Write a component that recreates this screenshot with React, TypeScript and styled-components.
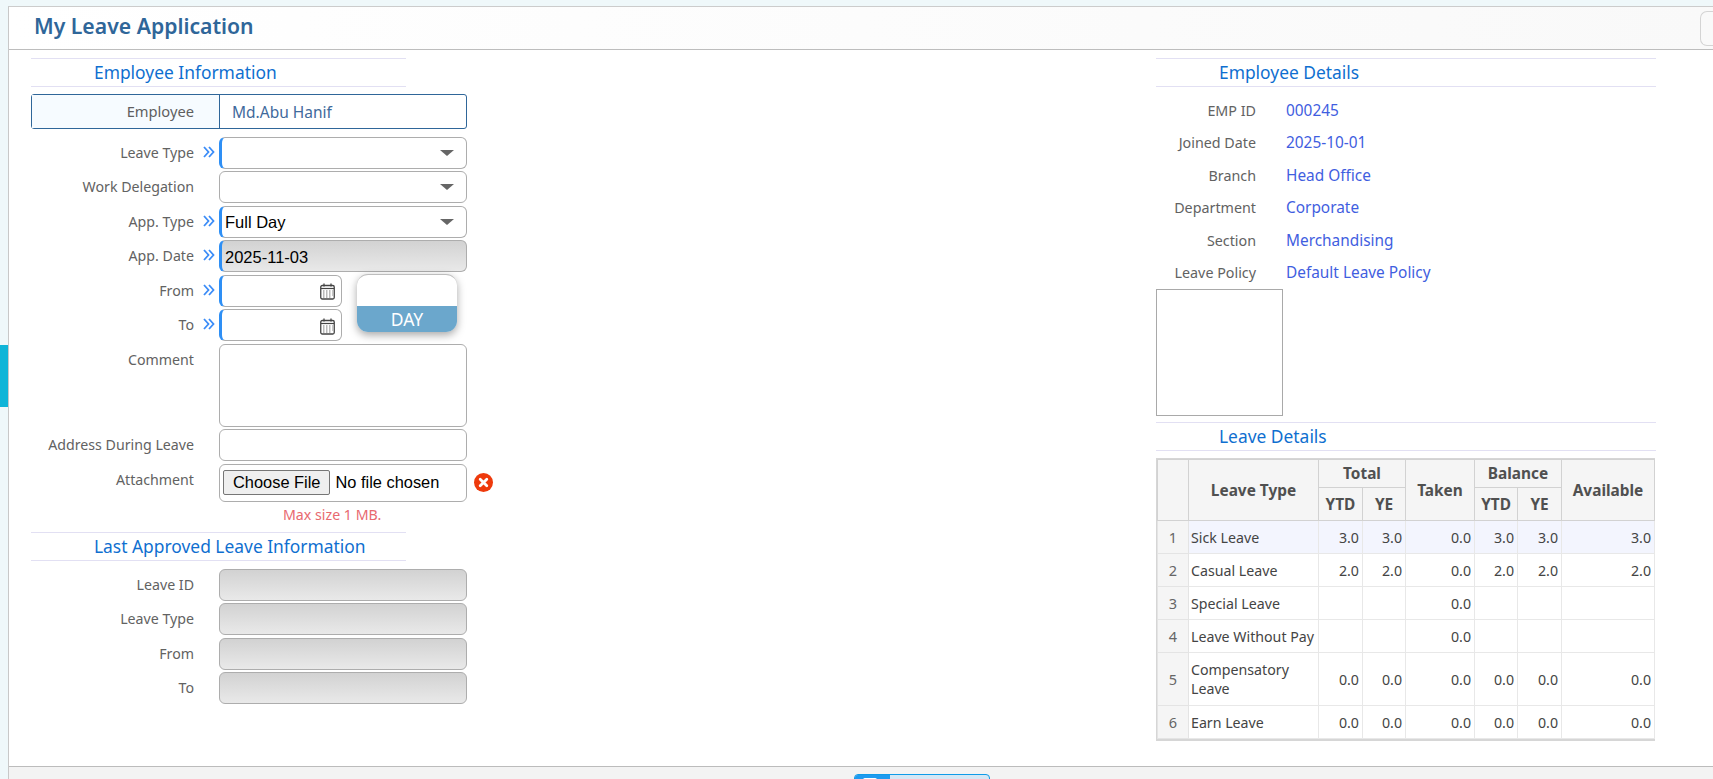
import React from 'react'
import styled, { createGlobalStyle } from 'styled-components'

const GlobalStyle = createGlobalStyle`
  html, body {
    margin: 0;
    padding: 0;
    height: 100%;
    background: #ffffff;
    overflow: hidden;
  }
  * {
    box-sizing: border-box;
  }
  #root {
    height: 100%;
  }
`

const UI_FONT = `'Noto Sans', 'Open Sans', sans-serif`
const FIELD_FONT = `'Liberation Sans', Arial, sans-serif`

const Page = styled.div`
  width: 1713px;
  height: 779px;
  display: flex;
  background: #eff8fa;
  font-family: ${UI_FONT};
  overflow: hidden;
`

const Rail = styled.div`
  width: 8px;
  flex: none;
  padding-top: 345px;
`

const RailTab = styled.div`
  height: 62px;
  background: #10b5d8;
`

const Frame = styled.div`
  flex: 1;
  min-width: 0;
  margin-top: 6px;
  border-top: 1px solid #cccccc;
  border-left: 1px solid #c8c8c8;
  background: #ffffff;
  display: flex;
  flex-direction: column;
`

const Header = styled.header`
  height: 43px;
  flex: none;
  border-bottom: 1px solid #bdbdbd;
  background: linear-gradient(to right, #ffffff, #f9f9f9);
  display: flex;
  align-items: center;
  justify-content: space-between;
  padding: 0 0 0 25px;
`

const Title = styled.h1`
  margin: 0 0 6px;
  font-size: 21.2px;
  font-weight: 600;
  color: #2f6699;
`

const HeaderButton = styled.div`
  width: 13px;
  height: 35px;
  border: 1px solid #d4d4d4;
  border-right: 0;
  border-radius: 7px 0 0 7px;
`

const Main = styled.main`
  flex: 1;
  min-height: 0;
  display: flex;
  justify-content: space-between;
  padding: 8px 57px 0 22px;
`

const LeftColumn = styled.section`
  width: 440px;
  display: flex;
  flex-direction: column;
`

const RightColumn = styled.section`
  width: 500px;
  display: flex;
  flex-direction: column;
`

const SectionTitle = styled.h2<{ $indent: number; $width?: number }>`
  margin: 0;
  height: 29px;
  width: ${(p) => (p.$width ? `${p.$width}px` : '100%')};
  flex: none;
  border-top: 1px solid #e2e0f3;
  border-bottom: 1px solid #e2e0f3;
  padding-left: ${(p) => p.$indent}px;
  font-size: 17.4px;
  font-weight: 400;
  line-height: 26px;
  color: #0f6fd0;
`

const EmployeeBox = styled.div`
  display: flex;
  width: 436px;
  height: 35px;
  margin-top: 7px;
  flex: none;
  border: 1px solid #2f6699;
  border-radius: 3px;
`

const EmployeeLabel = styled.div`
  width: 188px;
  flex: none;
  padding-right: 25px;
  border-right: 1px solid #2f6699;
  background: #f6fbff;
  text-align: right;
  font-size: 14.7px;
  line-height: 33px;
  color: #5f5f5f;
`

const EmployeeValue = styled.div`
  padding-left: 12px;
  font-size: 15.5px;
  line-height: 34px;
  color: #3f6a9c;
`

const FieldList = styled.div<{ $top: number }>`
  display: flex;
  flex-direction: column;
  gap: 2.45px;
  margin-top: ${(p) => p.$top}px;
`

const FieldRow = styled.div`
  display: flex;
  align-items: flex-start;
`

const FieldLabel = styled.label`
  width: 163px;
  height: 30px;
  flex: none;
  text-align: right;
  font-size: 14.2px;
  line-height: 31px;
  color: #626262;
  white-space: nowrap;
`

const Marker = styled.span`
  width: 25px;
  height: 30px;
  flex: none;
  padding-left: 9px;
  display: flex;
  align-items: center;
`

const Control = styled.div<{ $width?: number; $height?: number; $required?: boolean; $readOnly?: boolean; $inset?: number }>`
  width: ${(p) => p.$width ?? 248}px;
  height: ${(p) => p.$height ?? 32}px;
  flex: none;
  display: flex;
  align-items: center;
  justify-content: space-between;
  border: 1px solid #adadad;
  border-left: ${(p) => (p.$required ? '3px solid #2e8ff5' : '1px solid #adadad')};
  border-radius: 6px;
  background: ${(p) => (p.$readOnly ? 'linear-gradient(to bottom, #d2d2d2, #e9e9e9)' : '#ffffff')};
  padding: 2px ${(p) => p.$inset ?? 12}px 0 3px;
  font-family: ${FIELD_FONT};
  font-size: 16.5px;
  color: #000000;
`

const Caret = styled.span`
  width: 0;
  height: 0;
  margin-top: -2px;
  border-left: 7px solid transparent;
  border-right: 7px solid transparent;
  border-top: 6.5px solid #666666;
`

const DateGroup = styled.div`
  display: flex;
  align-items: flex-start;
`

const DateRows = styled.div`
  display: flex;
  flex-direction: column;
  gap: 2.45px;
`

const DayBox = styled.div`
  width: 100px;
  height: 58px;
  margin: -1px 0 0 15px;
  display: flex;
  flex-direction: column;
  justify-content: flex-end;
  border-top: 1px solid #bdbdbd;
  border-radius: 11px;
  background: #ffffff;
  box-shadow: 0 3px 9px rgba(0, 0, 0, 0.35);
  overflow: hidden;
`

const DayLabel = styled.div`
  height: 26px;
  background: #6ba7cc;
  text-align: center;
  font-size: 17.5px;
  line-height: 26px;
  color: #ffffff;
`

const FileControl = styled(Control)`
  padding: 0 3px;
  justify-content: flex-start;
`

const FileInput = styled.input`
  width: 240px;
  font-family: ${FIELD_FONT};
  font-size: 16.4px;
  color: #000000;

  &::file-selector-button {
    font: inherit;
    padding: 2px 9px;
    margin-right: 5px;
    border: 1px solid #767676;
    border-radius: 2px;
    background: #efefef;
  }
`

const ClearButton = styled.button`
  width: 19px;
  height: 19px;
  flex: none;
  margin: 9px 0 0 7px;
  padding: 0;
  border: 0;
  background: transparent;
  display: flex;
`

const SizeHint = styled.div`
  margin: 3px 0 8px 163px;
  padding-left: 89px;
  font-size: 14.2px;
  line-height: 19px;
  color: #e8696f;
`

const DetailList = styled.dl`
  margin: 8px 0 0;
  display: grid;
  grid-template-columns: 100px 1fr;
  grid-auto-rows: 32.4px;
  column-gap: 30px;
`

const DetailLabel = styled.dt`
  text-align: right;
  font-size: 14.3px;
  line-height: 32px;
  color: #626262;
`

const DetailValue = styled.dd`
  margin: 0;
  font-size: 15.4px;
  line-height: 31.5px;
  color: #3f5ee0;
`

const PhotoBox = styled.div`
  width: 127px;
  height: 127px;
  margin: 0 0 6px;
  flex: none;
  border: 1px solid #a9a9a9;
`

const TableWrap = styled.div`
  width: 499px;
  margin-top: 7px;
  border: 1px solid #d6d6d6;
  border-right-width: 2px;
  border-bottom-width: 2px;
`

const LeaveTable = styled.table`
  width: 100%;
  table-layout: fixed;
  border-collapse: collapse;
  font-size: 14.2px;
`

const HeadCell = styled.th<{ $height?: number }>`
  height: ${(p) => p.$height ?? 34}px;
  padding: 0;
  border: 1px solid #d2d2d2;
  background: #f5f5f5;
  font-size: 15.4px;
  font-weight: 700;
  color: #505050;
`

const RowNumber = styled.td`
  padding: 0;
  border: 1px solid #e4e4e4;
  background: #f5f5f5;
  text-align: center;
  font-size: 14.5px;
  color: #666666;
`

const NameCell = styled.td`
  padding: 0 2px;
  border: 1px solid #e8e8e8;
  line-height: 19px;
  color: #444444;
`

const NumberCell = styled.td`
  padding: 0 3px;
  border: 1px solid #e8e8e8;
  text-align: right;
  color: #444444;
`

const TableRow = styled.tr<{ $height: number; $active?: boolean }>`
  height: ${(p) => p.$height}px;
  background: ${(p) => (p.$active ? '#f3f5fe' : '#ffffff')};
`

const Footer = styled.footer`
  height: 13px;
  flex: none;
  border-top: 1px solid #bcbcbc;
  background: #f3f3f3;
  display: flex;
  padding: 7px 0 0 845px;
  overflow: hidden;
`

const FooterButton = styled.div`
  width: 136px;
  height: 32px;
  display: flex;
  border: 1px solid #0f9be8;
  border-radius: 4px;
  background: #d4e7f5;
  overflow: hidden;
`

const FooterIcon = styled.div`
  width: 35px;
  flex: none;
  background: #1f9bf0;
  padding: 3px 0 0 8px;
`

const FooterGlyph = styled.div`
  width: 14px;
  height: 10px;
  border-radius: 2px;
  background: #ffffff;
`

const DoubleChevron = () => (
  <svg width='12' height='12' viewBox='0 0 12 12' fill='none' stroke='#3b8cf7' strokeWidth='1.8'>
    <polyline points='1,1 5.5,6 1,11' />
    <polyline points='6,1 10.5,6 6,11' />
  </svg>
)

const CalendarIcon = () => (
  <svg width='15' height='17' viewBox='0 0 15 17' fill='none'>
    <rect x='0.75' y='2.5' width='13.5' height='13.5' rx='1.5' stroke='#444444' strokeWidth='1.3' />
    <path d='M1 5.5h13' stroke='#444444' strokeWidth='1.2' />
    <path d='M4 0.5v3M11 0.5v3' stroke='#444444' strokeWidth='1.3' />
    <path
      d='M3 8h1.5M6 8h1.5M9 8h1.5M12 8h.8M3 10h1.5M6 10h1.5M9 10h1.5M12 10h.8M3 12h1.5M6 12h1.5M9 12h1.5M12 12h.8M3 14h1.5M6 14h1.5M9 14h1.5'
      stroke='#777777'
      strokeWidth='1.1'
    />
  </svg>
)

const ClearIcon = () => (
  <svg width='19' height='19' viewBox='0 0 19 19'>
    <circle cx='9.5' cy='9.5' r='9.5' fill='#ee3a0c' />
    <path d='M6.2 6.2l6.6 6.6M12.8 6.2l-6.6 6.6' stroke='#ffffff' strokeWidth='2.8' strokeLinecap='round' />
  </svg>
)

const Field = ({ label, required, children }: { label: string; required?: boolean; children: React.ReactNode }) => (
  <FieldRow>
    <FieldLabel>{label}</FieldLabel>
    <Marker>{required && <DoubleChevron />}</Marker>
    {children}
  </FieldRow>
)

const EMPLOYEE_DETAILS = [
  { label: 'EMP ID', value: '000245' },
  { label: 'Joined Date', value: '2025-10-01' },
  { label: 'Branch', value: 'Head Office' },
  { label: 'Department', value: 'Corporate' },
  { label: 'Section', value: 'Merchandising' },
  { label: 'Leave Policy', value: 'Default Leave Policy' },
]

const LEAVE_ROWS = [
  { name: 'Sick Leave', values: ['3.0', '3.0', '0.0', '3.0', '3.0', '3.0'], height: 33, active: true },
  { name: 'Casual Leave', values: ['2.0', '2.0', '0.0', '2.0', '2.0', '2.0'], height: 33 },
  { name: 'Special Leave', values: ['', '', '0.0', '', '', ''], height: 33 },
  { name: 'Leave Without Pay', values: ['', '', '0.0', '', '', ''], height: 33 },
  { name: 'Compensatory Leave', values: ['0.0', '0.0', '0.0', '0.0', '0.0', '0.0'], height: 53 },
  { name: 'Earn Leave', values: ['0.0', '0.0', '0.0', '0.0', '0.0', '0.0'], height: 33 },
]

const COLUMN_WIDTHS = [31, 130, 44, 43, 69, 43, 44, 93]

const App = () => {
  return (
    <>
      <GlobalStyle />
      <Page>
        <Rail>
          <RailTab />
        </Rail>
        <Frame>
          <Header>
            <Title>My Leave Application</Title>
            <HeaderButton />
          </Header>
          <Main>
            <LeftColumn>
              <SectionTitle $indent={63} $width={375}>
                Employee Information
              </SectionTitle>
              <EmployeeBox>
                <EmployeeLabel>Employee</EmployeeLabel>
                <EmployeeValue>Md.Abu Hanif</EmployeeValue>
              </EmployeeBox>
              <FieldList $top={8}>
                <Field label='Leave Type' required>
                  <Control $required>
                    <span />
                    <Caret />
                  </Control>
                </Field>
                <Field label='Work Delegation'>
                  <Control>
                    <span />
                    <Caret />
                  </Control>
                </Field>
                <Field label='App. Type' required>
                  <Control $required>
                    <span>Full Day</span>
                    <Caret />
                  </Control>
                </Field>
                <Field label='App. Date' required>
                  <Control $required $readOnly>
                    <span>2025-11-03</span>
                  </Control>
                </Field>
                <DateGroup>
                  <DateRows>
                    <Field label='From' required>
                      <Control $required $width={123} $inset={6}>
                        <span />
                        <CalendarIcon />
                      </Control>
                    </Field>
                    <Field label='To' required>
                      <Control $required $width={123} $inset={6}>
                        <span />
                        <CalendarIcon />
                      </Control>
                    </Field>
                  </DateRows>
                  <DayBox>
                    <DayLabel>DAY</DayLabel>
                  </DayBox>
                </DateGroup>
                <Field label='Comment'>
                  <Control $height={83.4} />
                </Field>
                <Field label='Address During Leave'>
                  <Control />
                </Field>
                <Field label='Attachment'>
                  <FileControl $height={38}>
                    <FileInput type='file' />
                  </FileControl>
                  <ClearButton type='button'>
                    <ClearIcon />
                  </ClearButton>
                </Field>
              </FieldList>
              <SizeHint>Max size 1 MB.</SizeHint>
              <SectionTitle $indent={63} $width={375}>
                Last Approved Leave Information
              </SectionTitle>
              <FieldList $top={8}>
                {['Leave ID', 'Leave Type', 'From', 'To'].map((label) => (
                  <Field key={label} label={label}>
                    <Control $readOnly />
                  </Field>
                ))}
              </FieldList>
            </LeftColumn>
            <RightColumn>
              <SectionTitle $indent={63}>Employee Details</SectionTitle>
              <DetailList>
                {EMPLOYEE_DETAILS.map((item) => (
                  <React.Fragment key={item.label}>
                    <DetailLabel>{item.label}</DetailLabel>
                    <DetailValue>{item.value}</DetailValue>
                  </React.Fragment>
                ))}
              </DetailList>
              <PhotoBox />
              <SectionTitle $indent={63}>Leave Details</SectionTitle>
              <TableWrap>
                <LeaveTable>
                  <colgroup>
                    {COLUMN_WIDTHS.map((width, index) => (
                      <col key={index} style={{ width }} />
                    ))}
                  </colgroup>
                  <thead>
                    <tr>
                      <HeadCell rowSpan={2} $height={28} />
                      <HeadCell rowSpan={2}>Leave Type</HeadCell>
                      <HeadCell colSpan={2} $height={28}>
                        Total
                      </HeadCell>
                      <HeadCell rowSpan={2}>Taken</HeadCell>
                      <HeadCell colSpan={2} $height={28}>
                        Balance
                      </HeadCell>
                      <HeadCell rowSpan={2}>Available</HeadCell>
                    </tr>
                    <tr>
                      <HeadCell $height={33}>YTD</HeadCell>
                      <HeadCell $height={33}>YE</HeadCell>
                      <HeadCell $height={33}>YTD</HeadCell>
                      <HeadCell $height={33}>YE</HeadCell>
                    </tr>
                  </thead>
                  <tbody>
                    {LEAVE_ROWS.map((row, index) => (
                      <TableRow key={row.name} $height={row.height} $active={row.active}>
                        <RowNumber>{index + 1}</RowNumber>
                        <NameCell>{row.name}</NameCell>
                        {row.values.map((value, valueIndex) => (
                          <NumberCell key={valueIndex}>{value}</NumberCell>
                        ))}
                      </TableRow>
                    ))}
                  </tbody>
                </LeaveTable>
              </TableWrap>
            </RightColumn>
          </Main>
          <Footer>
            <FooterButton>
              <FooterIcon>
                <FooterGlyph />
              </FooterIcon>
            </FooterButton>
          </Footer>
        </Frame>
      </Page>
    </>
  )
}

export default App
